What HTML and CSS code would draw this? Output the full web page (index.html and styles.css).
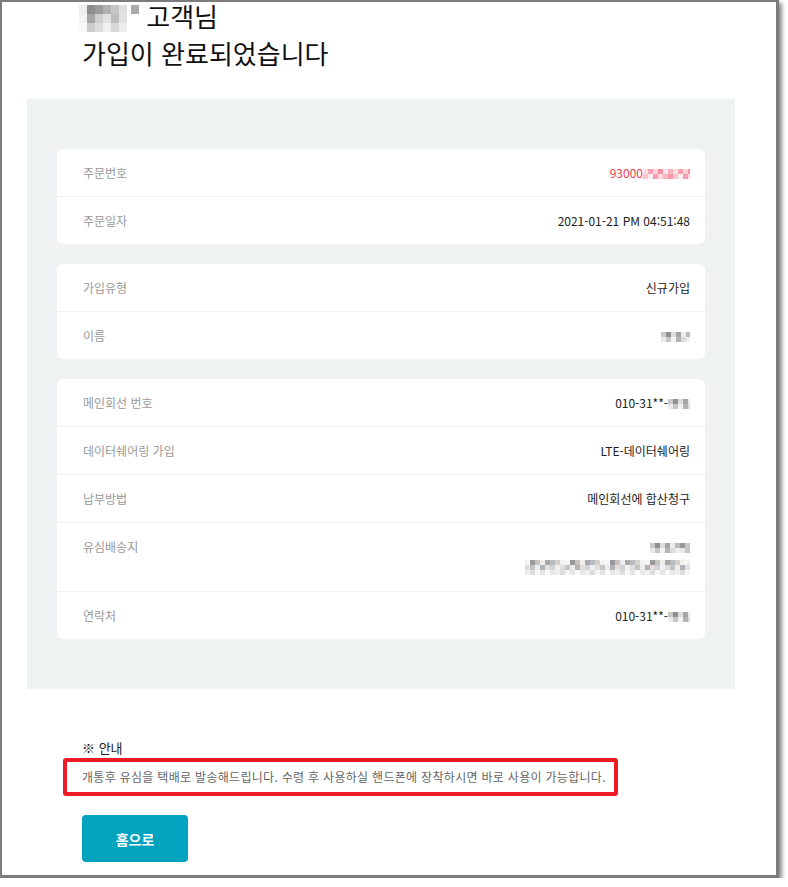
FILE: index.html
```html
<!DOCTYPE html>
<html lang="ko">
<head>
    <meta charset="UTF-8">
    <meta name="viewport" content="width=device-width, initial-scale=1.0">
    <title>가입 완료</title>
    <link rel="stylesheet" href="styles.css">
</head>
<body>
    <div class="frame">
        <h1 class="title">
            <span class="title-line"><span class="mosaic mosaic-name"></span> 고객님</span>
            <span class="title-line">가입이 완료되었습니다</span>
        </h1>

        <div class="panel">
            <div class="card">
                <div class="row">
                    <span class="label">주문번호</span>
                    <span class="value order">93000<span class="mosaic mosaic-pink w-order"></span></span>
                </div>
                <div class="row">
                    <span class="label">주문일자</span>
                    <span class="value">2021-01-21 PM 04:51:48</span>
                </div>
            </div>

            <div class="card">
                <div class="row">
                    <span class="label">가입유형</span>
                    <span class="value">신규가입</span>
                </div>
                <div class="row">
                    <span class="label">이름</span>
                    <span class="value"><span class="mosaic w-name"></span></span>
                </div>
            </div>

            <div class="card">
                <div class="row">
                    <span class="label">메인회선 번호</span>
                    <span class="value">010-31**-<span class="mosaic w-phone"></span></span>
                </div>
                <div class="row">
                    <span class="label">데이터쉐어링 가입</span>
                    <span class="value">LTE-데이터쉐어링</span>
                </div>
                <div class="row">
                    <span class="label">납부방법</span>
                    <span class="value">메인회선에 합산청구</span>
                </div>
                <div class="row row-top">
                    <span class="label">유심배송지</span>
                    <span class="value address">
                        <span class="line"><span class="mosaic w-zip"></span></span>
                        <span class="line"><span class="mosaic mosaic-tall w-addr"></span></span>
                    </span>
                </div>
                <div class="row">
                    <span class="label">연락처</span>
                    <span class="value">010-31**-<span class="mosaic w-phone"></span></span>
                </div>
            </div>
        </div>

        <div class="notice">
            <p class="notice-title">※ 안내</p>
            <p class="notice-text">개통후 유심을 택배로 발송해드립니다. 수령 후 사용하실 핸드폰에 장착하시면 바로 사용이 가능합니다.</p>
        </div>

        <button class="home-button">홈으로</button>
    </div>
</body>
</html>
```

FILE: styles.css
```css
body {
    margin: 0;
    padding: 0;
    background: #fff;
    font-family: "Noto Sans CJK KR", "Noto Sans", sans-serif;
    color: #222;
}
p {
    margin: 0;
}
.frame {
    width: 779px;
    height: 878px;
    box-sizing: border-box;
    border: solid #7c7c7c;
    border-width: 2px 3px 3px 2px;
    box-shadow: 3px 3px 4px rgba(0, 0, 0, 0.45);
    overflow: hidden;
    background: #fff;
}
.title {
    margin: 0 0 0 80px;
    font-size: 26px;
    font-weight: 400;
    color: #111;
}
.title-line {
    display: block;
    line-height: 28px;
}
.title-line + .title-line {
    margin-top: 7px;
}
.panel {
    margin: 32px 0 0 25px;
    width: 708px;
    box-sizing: border-box;
    padding: 50px 30px;
    background: #eef2f3;
    display: flex;
    flex-direction: column;
    gap: 20px;
}
.card {
    background: #fff;
    border-radius: 6px;
}
.row {
    display: flex;
    justify-content: space-between;
    align-items: center;
    padding: 16px 15px 16px 26px;
    line-height: 15px;
    font-size: 12px;
    border-top: 1px solid #f0f2f3;
}
.row:first-child {
    border-top: none;
}
.row-top {
    align-items: flex-start;
}
.label {
    color: #999;
}
.value {
    color: #222;
    text-align: right;
}
.order {
    color: #f0384f;
}
.address {
    display: flex;
    flex-direction: column;
    align-items: flex-end;
    gap: 6px;
}
.line {
    display: block;
    height: 15px;
}

/* blurred personal data */
.mosaic {
    display: inline-block;
    vertical-align: -1px;
    height: 10px;
    background:
        repeating-linear-gradient(90deg, #c9c9c9 0 5px, #8f8f8f 5px 10px, #dedede 10px 15px, #a5a5a5 15px 20px, #ececec 20px 25px, #bcbcbc 25px 30px, #999 30px 35px) 0 0 / 100% 5px no-repeat,
        repeating-linear-gradient(90deg, #eaeaea 0 5px, #c6c6c6 5px 10px, #f2f2f2 10px 15px, #b4b4b4 15px 20px, #dcdcdc 20px 25px, #eeeeee 25px 30px) 0 5px / 100% 5px no-repeat;
}
.mosaic-pink {
    background:
        repeating-linear-gradient(90deg, #fcdde2 0 5px, #f6a4b1 5px 10px, #fbcfd6 10px 15px, #f4919f 15px 20px, #fde6ea 20px 25px, #f8b2bd 25px 30px) 0 0 / 100% 5px no-repeat,
        repeating-linear-gradient(90deg, #f9c4cd 0 5px, #feeef1 5px 10px, #f6a0ae 10px 15px, #fcd8de 15px 20px, #f8b6c1 20px 25px, #f59aa9 25px 30px) 0 5px / 100% 5px no-repeat;
}
.mosaic-tall {
    height: 15px;
    background:
        repeating-linear-gradient(90deg, #f4f4f4 0 5px, #9a9a9a 5px 10px, #c9c3bd 10px 15px, #eeeeee 15px 20px, #a9a9a9 20px 25px, #b8bcc4 25px 30px, #d8d0c8 30px 35px, #f2f2f2 35px 40px) 0 0 / 100% 5px no-repeat,
        repeating-linear-gradient(90deg, #dedede 0 5px, #c4c4c4 5px 10px, #ececec 10px 15px, #b0b4ba 15px 20px, #e6ded8 20px 25px, #cfd3d8 25px 30px, #f0f0f0 30px 35px) 0 5px / 100% 5px no-repeat,
        repeating-linear-gradient(90deg, #eeeeee 0 5px, #dddddd 5px 10px, #f6f6f6 10px 15px, #e4e4e4 15px 20px, #fafafa 20px 25px, #e8e8e8 25px 30px) 0 10px / 100% 5px no-repeat;
}
.mosaic-name {
    width: 60px;
    height: 27px;
    margin-left: -3px;
    vertical-align: -5px;
    background:
        repeating-linear-gradient(90deg, #ededed 0 8px, #8d8d8d 8px 16px, #9c9c9c 16px 24px, #b0b0b0 24px 32px, #c6c6c6 32px 40px, #dedede 40px 48px, #fff 48px 52px, #aaa 52px 60px) 0 0 / 100% 9px no-repeat,
        repeating-linear-gradient(90deg, #f2f2f2 0 8px, #a6a6a6 8px 16px, #cfcfcf 16px 24px, #e0e0e0 24px 32px, #bdbdbd 32px 40px, #e2e2e2 40px 48px, #fff 48px 60px) 0 9px / 100% 9px no-repeat,
        repeating-linear-gradient(90deg, #f7f7f7 0 8px, #cccccc 8px 16px, #dddddd 16px 24px, #efefef 24px 32px, #d8d8d8 32px 40px, #ececec 40px 48px, #fff 48px 60px) 0 18px / 100% 9px no-repeat;
}
.w-order {
    width: 47px;
}
.w-name {
    width: 29px;
}
.w-phone {
    width: 22px;
}
.w-zip {
    width: 40px;
}
.w-addr {
    width: 165px;
}

.notice {
    margin: 50px 0 0 61px;
}
.notice-title {
    margin-left: 19px;
    font-size: 13px;
    line-height: 18px;
    color: #222;
}
.notice-text {
    margin-top: 1px;
    width: 555px;
    box-sizing: border-box;
    border: 4px solid #ed1c24;
    border-radius: 3px;
    padding: 7px 10px 7px 15px;
    font-size: 12px;
    letter-spacing: 0.3px;
    line-height: 16px;
    color: #666;
    white-space: nowrap;
}
.home-button {
    display: block;
    margin: 19px 0 0 80px;
    width: 106px;
    height: 47px;
    border: none;
    border-radius: 4px;
    background: #01a3bf;
    color: #fff;
    font-family: inherit;
    font-size: 14px;
    font-weight: bold;
    cursor: pointer;
}
```
